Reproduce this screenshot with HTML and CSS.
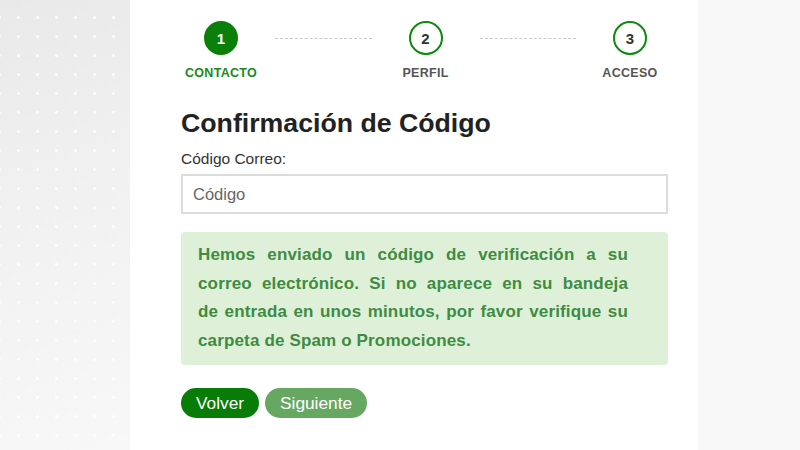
FILE: index.html
```html
<!DOCTYPE html>
<html lang="es">
<head>
<meta charset="utf-8">
<title>Confirmación de Código</title>
<link rel="stylesheet" href="styles.css">
</head>
<body>
<div class="layout">
  <aside class="side-left"></aside>
  <main class="panel">
    <div class="stepper">
      <div class="step active">
        <div class="circle">1</div>
        <div class="label">CONTACTO</div>
      </div>
      <div class="connector"></div>
      <div class="step">
        <div class="circle">2</div>
        <div class="label">PERFIL</div>
      </div>
      <div class="connector"></div>
      <div class="step">
        <div class="circle">3</div>
        <div class="label">ACCESO</div>
      </div>
    </div>
    <h1 class="title">Confirmación de Código</h1>
    <label class="field-label" for="code">Código Correo:</label>
    <input class="field-input" id="code" type="text" placeholder="Código">
    <div class="alert">Hemos enviado un código de verificación a su correo electrónico. Si no aparece en su bandeja de&nbsp;entrada en unos minutos, por favor verifique su carpeta de Spam o Promociones.</div>
    <div class="actions">
      <button class="btn btn-primary">Volver</button>
      <button class="btn btn-disabled">Siguiente</button>
    </div>
  </main>
  <aside class="side-right"></aside>
</div>
</body>
</html>
```
FILE: styles.css
```css
* { box-sizing: border-box; }
html, body { margin: 0; padding: 0; }
body {
  font-family: "Liberation Sans", Arial, sans-serif;
  color: #222;
  background: #fff;
}
.layout {
  display: flex;
  width: 800px;
  height: 450px;
  overflow: hidden;
}
.side-left {
  width: 130px;
  flex: none;
  background-color: #f0f0f0;
  background-image:
    radial-gradient(circle, rgba(255,255,255,0.85) 1.1px, transparent 1.7px),
    linear-gradient(160deg, #e9e9e9 0%, #f1f1f1 45%, #f8f8f8 100%);
  background-size: 19px 19px, 100% 100%;
  background-position: 9px 8px, 0 0;
}
.side-right {
  flex: 1;
  background: #f8f8f8;
}
.panel {
  width: 568px;
  flex: none;
  background: #fff;
  padding: 21px 30px 0 51px;
  display: flex;
  flex-direction: column;
  align-items: stretch;
}
.stepper {
  display: flex;
  align-items: flex-start;
  padding: 0 0 0 2px;
}
.step {
  display: flex;
  flex-direction: column;
  align-items: center;
  width: 76px;
  flex: none;
}
.circle {
  width: 34px;
  height: 34px;
  border-radius: 50%;
  border: 2px solid #0b8a0b;
  background: #fff;
  color: #333;
  font-weight: bold;
  font-size: 15px;
  display: flex;
  align-items: center;
  justify-content: center;
}
.step.active .circle {
  background: #0a7f0a;
  border-color: #0a7f0a;
  color: #fff;
}
.label {
  margin-top: 11px;
  font-size: 12.5px;
  font-weight: bold;
  letter-spacing: 0.3px;
  color: #555;
}
.step.active .label { color: #1a8a1a; }
.connector {
  flex: 1;
  margin: 17px 16px 0;
  border-top: 1px dashed #c8c8c8;
}
.title {
  margin: 27px 0 0;
  font-size: 26.7px;
  font-weight: bold;
  color: #222;
  line-height: 33px;
}
.field-label {
  margin-top: 9px;
  font-size: 15.5px;
  color: #333;
  line-height: 20px;
}
.field-input {
  margin-top: 5px;
  height: 40px;
  width: 100%;
  border: 2px solid #dcdcdc;
  padding: 0 10px;
  font-family: inherit;
  font-size: 16.5px;
  color: #333;
  outline: none;
}
.field-input::placeholder { color: #666; }
.alert {
  margin-top: 18px;
  background: #dff0d8;
  border-radius: 4px;
  padding: 9px 40px 10px 17px;
  font-size: 17px;
  font-weight: bold;
  letter-spacing: 0.15px;
  line-height: 28.5px;
  color: #3e8c42;
  text-align: justify;
}
.actions {
  margin-top: 23px;
  display: flex;
  gap: 6px;
}
.btn {
  height: 30px;
  border: none;
  border-radius: 15px;
  padding: 0 15px;
  font-family: inherit;
  font-size: 17.3px;
  color: #fff;
  line-height: 30px;
}
.btn-primary { background: #077c07; }
.btn-disabled { background: #66a862; }
```
